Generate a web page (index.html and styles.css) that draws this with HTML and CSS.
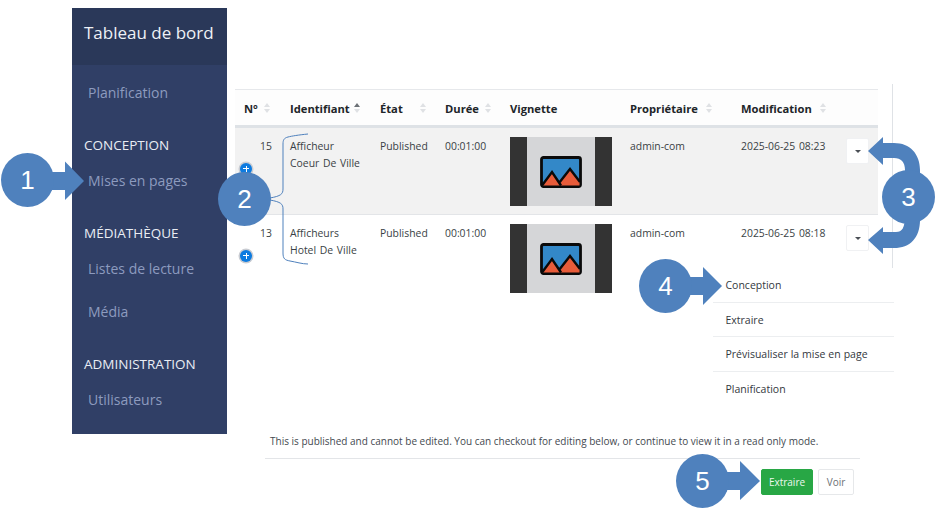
FILE: index.html
```html
<!DOCTYPE html>
<html lang="fr">
<head>
<meta charset="utf-8">
<title>Mises en pages</title>
<link rel="stylesheet" href="styles.css">
</head>
<body>
<div class="page">
  <aside class="sidebar">
    <div class="brand">Tableau de bord</div>
    <nav class="nav">
      <a class="nav-item">Planification</a>
      <div class="nav-head">CONCEPTION</div>
      <a class="nav-item">Mises en pages</a>
      <div class="nav-head">MÉDIATHÈQUE</div>
      <a class="nav-item">Listes de lecture</a>
      <a class="nav-item">Média</a>
      <div class="nav-head">ADMINISTRATION</div>
      <a class="nav-item">Utilisateurs</a>
    </nav>
  </aside>
  <main class="main">
    <div class="table-wrap">
      <table class="grid">
        <colgroup>
          <col class="c-num"><col class="c-id"><col class="c-state"><col class="c-dur"><col class="c-thumb"><col class="c-owner"><col class="c-mod"><col class="c-act">
        </colgroup>
        <thead>
          <tr>
            <th class="th-num"><span class="th-in">N°<span class="sort"><i class="up"></i><i class="down"></i></span></span></th>
            <th><span class="th-in">Identifiant<span class="sort near"><i class="up on"></i><i class="down"></i></span></span></th>
            <th><span class="th-in">État<span class="sort wide"><i class="up"></i><i class="down"></i></span></span></th>
            <th><span class="th-in">Durée<span class="sort"><i class="up"></i><i class="down"></i></span></span></th>
            <th>Vignette</th>
            <th><span class="th-in">Propriétaire<span class="sort far"><i class="up"></i><i class="down"></i></span></span></th>
            <th><span class="th-in">Modification<span class="sort far"><i class="up"></i><i class="down"></i></span></span></th>
            <th></th>
          </tr>
        </thead>
        <tbody>
          <tr class="odd">
            <td class="td-num"><div class="num">15</div><span class="plus"></span></td>
            <td>Afficheur<br>Coeur De Ville</td>
            <td>Published</td>
            <td>00:01:00</td>
            <td class="td-thumb">
              <div class="thumb"><svg class="pic" viewBox="0 0 42 32"><rect x="1.5" y="1.5" width="39" height="29" rx="2" fill="#3388c8" stroke="#0a0a0a" stroke-width="2.800"/><path d="M2.500 29.500 L12 16 L20 27 L30 13 L39.500 26 V29.500 Z" fill="#e85c3a"/><path d="M2 29.500 L12 16 L21 29.500 M19 27 L30 13 L40 26" fill="none" stroke="#0a0a0a" stroke-width="2.400"/></svg></div>
            </td>
            <td>admin-com</td>
            <td>2025-06-25 08:23</td>
            <td class="td-act"><button class="caret-btn"><span class="caret"></span></button></td>
          </tr>
          <tr>
            <td class="td-num"><div class="num">13</div><span class="plus"></span></td>
            <td>Afficheurs<br>Hotel De Ville</td>
            <td>Published</td>
            <td>00:01:00</td>
            <td class="td-thumb">
              <div class="thumb"><svg class="pic" viewBox="0 0 42 32"><rect x="1.5" y="1.5" width="39" height="29" rx="2" fill="#3388c8" stroke="#0a0a0a" stroke-width="2.800"/><path d="M2.500 29.500 L12 16 L20 27 L30 13 L39.500 26 V29.500 Z" fill="#e85c3a"/><path d="M2 29.500 L12 16 L21 29.500 M19 27 L30 13 L40 26" fill="none" stroke="#0a0a0a" stroke-width="2.400"/></svg></div>
            </td>
            <td>admin-com</td>
            <td>2025-06-25 08:18</td>
            <td class="td-act"><button class="caret-btn"><span class="caret"></span></button></td>
          </tr>
        </tbody>
      </table>
      <ul class="menu">
        <li>Conception</li>
        <li>Extraire</li>
        <li>Prévisualiser la mise en page</li>
        <li>Planification</li>
      </ul>
    </div>
    <p class="notice">This is published and cannot be edited. You can checkout for editing below, or continue to view it in a read only mode.</p>
    <div class="actions">
      <button class="btn btn-green">Extraire</button>
      <button class="btn btn-light">Voir</button>
    </div>
  </main>
</div>
<svg class="marks" viewBox="0 0 936 509" width="936" height="509">
  <path class="fill" d="M50 172 H65 V161.500 L84 181 L65 200 V190 H50 Z"/>
  <path class="fill" d="M685 277 H703 V267 L722 286 L703 305 V295 H685 Z"/>
  <path class="fill" d="M722 472 H740 V461 L760 481 L740 500 V490 H722 Z"/>
  <path class="fill" d="M868 151 L883 137 V143 H894 C910 143 920 154 920 170 V185 H905 V170 C905 162 901 158 894 158 H883 V165 Z"/>
  <path class="fill" d="M868 240 L883 227 V232 H896 C902 232 905 228 905 215 H920 V220 C920 238 910 248 894 248 H883 V254 Z"/>
  <path class="line" d="M308 134 C298 135 292 136 288 137 C284 138 283 140 283 144 V189 C283 194 281 196 270 198"/>
  <path class="line" d="M270 200 C281 202 283 204 283 209 V253 C283 259 285 260 290 261 C296 262 302 264 308 264"/>
</svg>
<div class="badge b1">1</div>
<div class="badge b2">2</div>
<div class="badge b3">3</div>
<div class="badge b4">4</div>
<div class="badge b5">5</div>
</body>
</html>
```
FILE: styles.css
```css
* { box-sizing: border-box; }
html, body { margin: 0; padding: 0; }
body {
  width: 936px;
  height: 509px;
  overflow: hidden;
  background: #fff;
  font-family: "Open Sans", "Noto Sans", sans-serif;
  position: relative;
}
.page { display: flex; padding: 8px 0 0 72px; align-items: flex-start; }

.sidebar { width: 155px; height: 426px; background: #303f66; flex: none; }
.brand {
  height: 57px;
  background: #2a3859;
  color: #eef1f6;
  font-size: 17px;
  line-height: 49px;
  padding-left: 12px;
  white-space: nowrap;
}
.nav { padding-top: 6.5px; display: flex; flex-direction: column; }
.nav-item {
  height: 43px;
  line-height: 41px;
  padding-left: 16px;
  font-size: 14px;
  color: #8d9bbf;
  white-space: nowrap;
}
.nav-head {
  height: 29px;
  line-height: 29px;
  margin-top: 16px;
  padding-left: 12px;
  font-size: 13.5px;
  color: #e9edf4;
  white-space: nowrap;
}

.main { margin-left: 8px; width: 658px; flex: none; display: flex; flex-direction: column; }
.table-wrap {
  position: relative;
  margin-top: 76px;
  width: 658px;
  height: 221px;
  padding-top: 5px;
  border-right: 1px solid #dfe2e6;
}
.grid {
  border-collapse: separate;
  border-spacing: 0;
  table-layout: fixed;
  width: 643px;
  font-size: 10.4px;
  word-spacing: 1px;
  color: #3a3f45;
}
.c-num { width: 45px; }
.c-id { width: 90px; }
.c-state { width: 65px; }
.c-dur { width: 65px; }
.c-thumb { width: 120px; }
.c-owner { width: 111px; }
.c-mod { width: 104px; }
.c-act { width: 43px; }
.grid th {
  height: 39px;
  padding: 1px 0 0 10px;
  text-align: left;
  font-size: 11.2px;
  font-weight: 700;
  color: #212529;
  background: #fdfdfd;
  border-top: 1px solid #e6e8eb;
  border-bottom: 3px solid #dee2e6;
  white-space: nowrap;
}
.grid th.th-num { padding-left: 9px; }
.th-in { display: flex; align-items: center; }
.sort { display: inline-flex; flex-direction: column; gap: 2px; margin-left: 6px; }
.sort.wide { margin-left: 17px; }
.sort.near { margin-left: 4px; }
.sort.far { margin-left: 8px; }
.sort i { display: block; width: 0; height: 0; border-left: 3px solid transparent; border-right: 3px solid transparent; }
.sort .up { border-bottom: 4px solid #dfe1e4; }
.sort .down { border-top: 4px solid #dfe1e4; }
.sort .up.on { border-bottom-color: #6c7176; }
.grid td {
  height: 87px;
  padding: 10px 0 0 10px;
  vertical-align: top;
  line-height: 16.500px;
  border-bottom: 1px solid #e3e5e8;
  white-space: nowrap;
}
.grid tr.odd td { background: #f2f2f2; }
.grid tbody tr:last-child td { border-bottom: 0; }
.grid td.td-num { padding: 10px 8px 0 5px; }
.num { text-align: right; }
.plus {
  display: block;
  position: relative;
  width: 12px;
  height: 12px;
  margin-top: 8px;
  border-radius: 50%;
  background: #0d7be0;
  box-shadow: 0 0 0 1.500px #c9ccd2;
}
.plus::before, .plus::after { content: ""; position: absolute; background: #fff; }
.plus::before { left: 3px; top: 5.500px; width: 6px; height: 1px; }
.plus::after { left: 5.500px; top: 3px; width: 1px; height: 6px; }
.grid td.td-thumb { padding: 9px 0 0 10px; }
.thumb {
  width: 102px;
  height: 69px;
  background: #d5d6d8;
  border-left: 17px solid #333;
  border-right: 17px solid #333;
  display: flex;
  align-items: center;
  justify-content: center;
}
.pic { width: 42px; height: 32px; display: block; }
.grid td.td-act { padding: 10px 0 0 11px; }
.caret-btn {
  display: flex;
  align-items: center;
  justify-content: center;
  width: 23px;
  height: 26px;
  padding: 0;
  background: #fff;
  border: 1px solid #f0f1f3;
  border-radius: 2px;
}
.caret { display: block; width: 0; height: 0; border-left: 3px solid transparent; border-right: 3px solid transparent; border-top: 3px solid #4a4f55; }

.menu {
  position: absolute;
  left: 478px;
  top: 184px;
  width: 181px;
  margin: 0;
  padding: 0;
  list-style: none;
  background: #fff;
  font-size: 10.5px;
  word-spacing: 0.25px;
  color: #33383e;
}
.menu li {
  height: 34.500px;
  line-height: 34px;
  padding-left: 12.500px;
  border-bottom: 1px solid #eceef0;
  white-space: nowrap;
}
.menu li:last-child { border-bottom: 0; }

.notice {
  margin: 128px 0 0 30px;
  height: 26px;
  font-size: 10px;
  line-height: 16px;
  color: #444950;
  white-space: nowrap;
  width: 595px;
  border-bottom: 1px solid #e3e5e8;
  padding-left: 5px;
}
.actions { display: flex; justify-content: flex-end; gap: 5px; width: 619px; margin-top: 10px; }
.btn { height: 26px; padding: 0; font: inherit; font-size: 10px; border-radius: 2px; }
.btn-green { width: 52px; background: #28a745; border: 1px solid #28a745; color: #eef8ef; }
.btn-light { width: 36px; background: #fff; border: 1px solid #e6e8ea; color: #6c7176; }

.marks { position: absolute; left: 0; top: 0; pointer-events: none; }
.marks .fill { fill: #4f81bd; }
.marks .line { fill: none; stroke: #4f81bd; stroke-width: 1; }

.badge {
  position: absolute;
  width: 53px;
  height: 54px;
  border-radius: 50%;
  background: #4f81bd;
  color: #fff;
  font-family: "Liberation Sans", Arial, sans-serif;
  font-size: 26px;
  line-height: 54px;
  text-align: center;
}
.b1 { left: 1px; top: 153px; }
.b2 { left: 218px; top: 172px; }
.b3 { left: 882px; top: 170px; }
.b4 { left: 639px; top: 259px; }
.b5 { left: 676px; top: 454px; }
```
